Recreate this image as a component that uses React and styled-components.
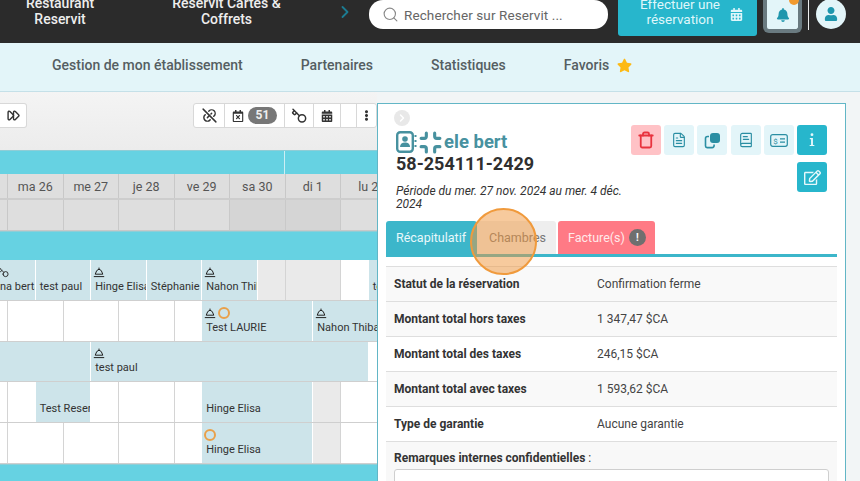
import React from 'react';
import styled, { createGlobalStyle } from 'styled-components';
import { Search, ChevronRight, FileText, BookText, FastForward, Key, Minimize, Trash } from 'lucide-react';
import { FaBell, FaUser, FaStar, FaCalendarAlt, FaRegEdit, FaEllipsisV, FaRegCalendarTimes } from 'react-icons/fa';
import { TbLinkOff } from 'react-icons/tb';

const Global = createGlobalStyle`
  html, body { margin: 0; padding: 0; width: 860px; height: 481px; overflow: hidden; background: #f2f5f6; }
  * { box-sizing: border-box; }
  body { font-family: Roboto, "Liberation Sans", sans-serif; }
`;
const Page = styled.div`width: 860px; height: 481px; overflow: hidden; position: relative; display: flex; flex-direction: column;`;
const Header = styled.header`height: 43px; flex: none; background: #2b2b2b; display: flex; align-items: flex-start; overflow: hidden;`;
const TopLink = styled.div`
  width: ${p => p.$w}px; margin-top: -5px; text-align: center; color: #eee; font-size: 14px; font-weight: 500; line-height: 16px;
`;
const Chev = styled.div`width: 24px; color: #1c7c92; display: flex; justify-content: center; padding-top: 2px;`;
const SearchBox = styled.div`
  width: 239px; height: 29px; margin-left: 12px; background: #fff; border-radius: 14px;
  display: flex; align-items: center; gap: 5px; padding: 0 14px 0 13px; color: #666; font-size: 13.5px; letter-spacing: .1px;
`;
const BookBtn = styled.div`
  width: 139px; height: 36px; margin-left: 10px; background: #27b6cc; border-radius: 0 0 3px 3px; color: #dff6fa; font-size: 13.5px; line-height: 15px;
  display: flex; align-items: center; justify-content: space-between; padding: 0 14px 0 18px; text-align: center;
`;
const BookLabel = styled.div`width: 88px; margin-top: -13px;`;
const BookIcon = styled.span`display: flex; margin-top: -8px;`;
const BellBtn = styled.div`
  width: 39px; height: 33px; margin-left: 6px; background: #e3f5f9; border: 4px solid #6a7a80; border-top: 0; border-radius: 0 0 6px 6px;
  color: #1f96ad; display: flex; align-items: center; justify-content: center; position: relative;
`;
const Dot = styled.span`position: absolute; right: -1px; top: -5px; width: 10px; height: 10px; border-radius: 50%; background: #f29a2e;`;
const Divider = styled.div`width: 1px; height: 30px; background: #eee; margin-left: 6px;`;
const Avatar = styled.div`
  width: 30px; height: 30px; border-radius: 50%; margin: -1px 0 0 7px; background: #e3f5f9; color: #1f96ad; display: flex; align-items: center; justify-content: center;
`;
const SubNav = styled.nav`
  height: 49px; flex: none; background: #e3f5f9; border-bottom: 1px solid #c5e0e8; display: flex; align-items: center; gap: 58px; padding: 0 0 4px 52px;
  color: #555e62; font-size: 14px; font-weight: 500;
`;
const NavItem = styled.div`display: flex; align-items: center; gap: 8px;`;
const Body = styled.div`flex: 1; display: flex; min-height: 0;`;
const Calendar = styled.section`width: 377px; flex: none; background: #f0f0f0; display: flex; flex-direction: column; overflow: hidden;`;
const Toolbar = styled.div`height: 58px; flex: none; padding-top: 11px; display: flex; justify-content: space-between; align-items: flex-start; background: linear-gradient(#f4f4f4, #ececec);`;
const Group = styled.div`height: 25px; display: flex; background: #fff; border: 1px solid #d8d8d8; border-radius: 3px; ${p => p.$left ? 'border-left: 0; border-radius: 0 3px 3px 0;' : ''}`;
const ToolBtn = styled.div`
  width: ${p => p.$w}px; display: flex; align-items: center; justify-content: center; gap: 4px; color: #333; border-right: 1px solid #d8d8d8;
  &:last-child { border-right: 0; }
`;
const Badge = styled.span`background: #777; color: #eee; font-size: 12px; font-weight: 700; border-radius: 9px; padding: 0 8px; height: 17px; line-height: 17px;`;
const TealBar = styled.div`
  height: ${p => p.$h}px; flex: none; background: #66d2e2; border-top: 1px solid #8fcdd6;
  display: grid; grid-template-columns: 285px 1fr;
`;
const Split = styled.div`border-right: 1px solid #cdeef4;`;
const Grid = styled.div`
  display: grid; grid-template-columns: 8px repeat(15, 27.75px); height: ${p => p.$h}px; flex: none;
  grid-template-rows: 1fr; background: ${p => p.$bg || '#fff'}; border-bottom: ${p => p.$bb || '1px solid #cfcfcf'};
`;
const Cell = styled.div`
  grid-row: 1; grid-column: ${p => p.$c}; background: ${p => p.$grey ? '#eaeaea' : 'transparent'};
  border-right: ${p => p.$line ? '1px solid #d4d4d4' : '0'};
`;
const DayLabel = styled.div`
  grid-row: 1; grid-column: span 2; display: flex; align-items: center; justify-content: center; white-space: nowrap; overflow: hidden;
  font-size: 12.5px; color: #555; border-right: 1px solid #c8c8c8;
`;
const Stub = styled.div`grid-row: 1; grid-column: 1; border-right: 1px solid #c8c8c8;`;
const HeadCell = styled.div`
  grid-row: 1; grid-column: span 2; border-right: 1px solid #c9c9c9; background: ${p => p.$dark ? '#d5d5d5' : 'transparent'};
`;
const Event = styled.div`
  grid-row: 1; grid-column: ${p => p.$c}; z-index: 1; background: #cde4ea; min-width: 0; overflow: hidden; white-space: nowrap;
  margin-right: 1px; display: flex; flex-direction: column; justify-content: flex-end; padding: 0 0 7px ${p => p.$pl ?? 4}px;
  font-size: 11px; color: #333;
`;
const Marks = styled.div`display: flex; align-items: center; gap: 2px; height: 14px; margin: 0 0 1px -2px;`;
const Ring = styled.span`width: 12px; height: 12px; border-radius: 50%; border: 2px solid #e9a04a; display: block;`;
const FlipKey = styled(Key)`transform: scaleX(-1); flex: none;`;
const Panel = styled.aside`
  width: 469px; flex: none; margin-top: 11px; background: #fff; border: 1px solid #62b6c6; border-bottom: 0; padding: 6px 8px 0 8px; position: relative; overflow: hidden;
`;
const Collapse = styled.div`
  width: 16px; height: 16px; border-radius: 50%; background: #e8e8e8; margin-left: 8px; color: #fff; display: flex; align-items: center; justify-content: center;
`;
const Top = styled.div`display: flex; justify-content: space-between; height: 84px; padding: 0 0 0 10px;`;
const Identity = styled.div`width: 232px; padding-top: 5px;`;
const Name = styled.div`display: flex; align-items: center; color: #47919f; font-size: 18.5px; font-weight: 700; height: 22px; gap: 1px;`;
const Code = styled.div`font-size: 18px; font-weight: 700; color: #2f2f2f; line-height: 22px;`;
const Period = styled.div`font-size: 12px; font-style: italic; color: #333; line-height: 13px; margin-top: 10px;`;
const Actions = styled.div`display: grid; grid-template-columns: repeat(6, 30px); column-gap: 3.2px; row-gap: 7px; margin: -1px 10px 0 0; height: 67px; justify-content: end;`;
const Act = styled.div`
  width: 30px; height: 30px; border-radius: 3px; display: flex; align-items: center; justify-content: center;
  background: ${p => p.$v === 'danger' ? '#ffc2c6' : p.$v === 'solid' ? '#27b6cc' : '#e3f5f9'};
  color: ${p => p.$v === 'danger' ? '#e8333e' : p.$v === 'solid' ? '#e6f8fb' : '#2a8ea3'};
  grid-column: ${p => p.$col || 'auto'};
`;
const Tabs = styled.div`display: flex; height: 36px; margin-top: 11px; border-bottom: 3px solid #3cb6ca;`;
const Tab = styled.div`
  height: 33px; padding: 0 0 0 ${p => p.$pl || 10}px; display: flex; align-items: center; gap: 4px; font-size: 12.5px; margin-right: ${p => p.$mr || 0}px; border-radius: 3px 3px 0 0;
  background: ${p => p.$bg}; color: ${p => p.$c}; width: ${p => p.$w}px;
`;
const TabBadge = styled.span`width: 17px; height: 17px; border-radius: 50%; background: #6f6f6f; color: #fff; font-size: 10px; font-weight: 700; display: flex; align-items: center; justify-content: center;`;
const Table = styled.div`margin-top: 9px; width: 451px; border-top: 1px solid #dedede;`;
const Row = styled.div`
  height: 35px; display: flex; align-items: center; padding-left: 8px; font-size: 12px; background: ${p => p.$alt ? '#f9f9f9' : '#fff'}; border-bottom: 1px solid #dedede; color: #444;
`;
const RowKey = styled.div`width: 203px; font-weight: 700; color: #333;`;
const Remarks = styled.div`background: #f8f8f8; padding: 9px 8px 0; height: 60px; font-size: 12px; color: #333;`;
const RemarkLabel = styled.b`font-weight: 700;`;
const TextArea = styled.div`height: 40px; margin-top: 4px; background: #fff; border: 1px solid #cfcfcf; border-radius: 3px;`;
const Spot = styled.div`
  position: absolute; left: 470px; top: 208px; width: 67px; height: 67px; border-radius: 50%;
  background: rgba(240, 150, 60, .5); border: 2.5px solid #f09a3c; z-index: 5;
`;

const Cloche = () => (
  <svg width="12" height="11" viewBox="0 0 12 11" fill="none" stroke="#222" strokeWidth="1">
    <path d="M6 .6v1.6M2.2 7.2Q3.4 2.4 6 2.2Q8.6 2.4 9.8 7.2z" /><path d="M.8 9.6h10.4" />
  </svg>
);
const Copy = () => (
  <svg width="17" height="17" viewBox="0 0 17 17">
    <rect x="6" y="1" width="10" height="10" rx="3" fill="currentColor" />
    <path d="M5 4.5H3.5A2 2 0 0 0 1.5 6.5v7.5a1.6 1.6 0 0 0 1.6 1.6h5a2 2 0 0 0 2-2v-1" fill="none" stroke="currentColor" strokeWidth="1.6" />
  </svg>
);
const Bill = () => (
  <svg width="18" height="13" viewBox="0 0 18 13" fill="none" stroke="currentColor" strokeWidth="1.2">
    <rect x=".7" y=".7" width="16.6" height="11.6" rx="2" />
    <path d="M10 4.8h5M10 8.2h5" />
    <text x="3.2" y="9.6" fontSize="8" fontFamily="Roboto" fill="currentColor" stroke="none">$</text>
  </svg>
);
const InfoGlyph = () => (
  <svg width="8" height="14" viewBox="0 0 10 18" fill="currentColor">
    <circle cx="5" cy="2.2" r="1.8" />
    <path d="M2.2 6.5h4v8.8h1.8v1.5H2v-1.5h1.8V8H2.2z" />
  </svg>
);
const ContactCard = () => (
  <svg width="21" height="22" viewBox="0 0 21 22">
    <rect x="1.2" y="1.2" width="15.6" height="19.6" rx="3" fill="none" stroke="currentColor" strokeWidth="2.4" />
    <circle cx="9" cy="8" r="2.8" fill="currentColor" />
    <path d="M4 16c0-3 2.2-4.4 5-4.4s5 1.4 5 4.4z" fill="currentColor" />
    <path d="M18.5 5h2M18.5 10h2M18.5 15h2" stroke="currentColor" strokeWidth="2" />
  </svg>
);

const days = ['ma 26', 'me 27', 'je 28', 've 29', 'sa 30', 'di 1', 'lu 2'];

function Cells({ grey = [] }) {
  const out = [<Cell key="s" $c="1" $line />];
  for (let i = 0; i < 14; i++) out.push(<Cell key={i} $c={i + 2} $grey={grey.includes(i)} $line={i % 2 === 1} />);
  return out;
}

const Ev = ({ c, mark, ring, children, pl }) => (
  <Event $c={c} $pl={pl}>
    {(mark || ring) && <Marks>{mark && <Cloche />}{ring && <Ring />}</Marks>}
    {children}
  </Event>
);

export default function App() {
  return (
    <Page>
      <Global />
      <Header>
        <TopLink $w={120}>Restaurant<br />Reservit</TopLink>
        <TopLink $w={213}>Reservit Cartes &amp;<br />Coffrets</TopLink>
        <Chev><ChevronRight size={20} strokeWidth={2.2} /></Chev>
        <SearchBox><Search size={17} color="#888" strokeWidth={1.6} />Rechercher sur Reservit ...</SearchBox>
        <BookBtn><BookLabel>Effectuer une réservation</BookLabel><BookIcon><FaCalendarAlt size={13} /></BookIcon></BookBtn>
        <BellBtn><FaBell size={14} /><Dot /></BellBtn>
        <Divider />
        <Avatar><FaUser size={14} /></Avatar>
      </Header>
      <SubNav>
        <NavItem>Gestion de mon établissement</NavItem>
        <NavItem>Partenaires</NavItem>
        <NavItem>Statistiques</NavItem>
        <NavItem>Favoris <FaStar size={15} color="#fdb913" /></NavItem>
      </SubNav>
      <Body>
        <Calendar>
          <Toolbar>
            <Group $left><ToolBtn $w={26}><FastForward size={13} strokeWidth={2.6} /></ToolBtn></Group>
            <Group>
              <ToolBtn $w={31}><TbLinkOff size={17} /></ToolBtn>
              <ToolBtn $w={60}><FaRegCalendarTimes size={12} /><Badge>51</Badge></ToolBtn>
              <ToolBtn $w={29}><FlipKey size={16} strokeWidth={2.2} /></ToolBtn>
              <ToolBtn $w={27}><FaCalendarAlt size={12} /></ToolBtn>
              <ToolBtn $w={16} />
              <ToolBtn $w={19}><FaEllipsisV size={11} /></ToolBtn>
            </Group>
          </Toolbar>
          <TealBar $h={24}><Split /><div /></TealBar>
          <Grid $h={26} $bg="#dedede" $bb="2px solid #cdcdcd">
            <Stub />
            {days.map(d => <DayLabel key={d}>{d}</DayLabel>)}
          </Grid>
          <Grid $h={31} $bg="#dedede" $bb="1px solid #c8c8c8">
            <Stub />
            {days.map((d, i) => <HeadCell key={d} $dark={i === 4 || i === 5} />)}
          </Grid>
          <TealBar $h={29} />
          <Grid $h={41}>
            <Cells grey={[9, 10, 11]} />
            <Event $c="1 / span 2" $pl={0}><Marks><FlipKey size={11} strokeWidth={2} color="#222" /></Marks>na berta</Event>
            <Ev c="3 / span 2">test paul</Ev>
            <Ev c="5 / span 2" mark>Hinge Elisa</Ev>
            <Ev c="7 / span 2">Stéphanie</Ev>
            <Ev c="9 / span 2" mark>Nahon Thibault</Ev>
            <Ev c="15 / span 2">test</Ev>
          </Grid>
          <Grid $h={41}>
            <Cells />
            <Ev c="9 / span 4" mark ring>Test LAURIE</Ev>
            <Ev c="13 / span 4" mark>Nahon Thibault</Ev>
          </Grid>
          <Grid $h={40}>
            <Cells />
            <Ev c="1 / span 4"></Ev>
            <Ev c="5 / span 10" mark>test paul</Ev>
          </Grid>
          <Grid $h={41}>
            <Cells grey={[11]} />
            <Ev c="3 / span 2">Test Reservit</Ev>
            <Ev c="9 / span 4">Hinge Elisa</Ev>
          </Grid>
          <Grid $h={41}>
            <Cells grey={[11]} />
            <Ev c="9 / span 4" ring>Hinge Elisa</Ev>
          </Grid>
          <TealBar $h={20} />
        </Calendar>
        <Panel>
          <Collapse><ChevronRight size={12} strokeWidth={3} /></Collapse>
          <Top>
            <Identity>
              <Name>
                <ContactCard />
                <Minimize size={25} strokeWidth={3} />
                ele bert
              </Name>
              <Code>58-254111-2429</Code>
              <Period>Période du mer. 27 nov. 2024 au mer. 4 déc. 2024</Period>
            </Identity>
            <Actions>
              <Act $v="danger"><Trash size={18} strokeWidth={2.4} /></Act>
              <Act><FileText size={16} strokeWidth={1.7} /></Act>
              <Act><Copy /></Act>
              <Act><BookText size={16} strokeWidth={1.7} /></Act>
              <Act><Bill /></Act>
              <Act $v="solid"><InfoGlyph /></Act>
              <Act $v="solid" $col="6"><FaRegEdit size={17} /></Act>
            </Actions>
          </Top>
          <Tabs>
            <Tab $w={91} $bg="#3cb6ca" $c="#e8f8fb">Récapitulatif</Tab>
            <Tab $w={79} $pl={12} $mr={2} $bg="#eeeeee" $c="#777">Chambres</Tab>
            <Tab $w={97} $bg="#ff7a85" $c="#ffe9ea">Facture(s) <TabBadge>!</TabBadge></Tab>
          </Tabs>
          <Table>
            <Row $alt><RowKey>Statut de la réservation</RowKey>Confirmation ferme</Row>
            <Row $alt><RowKey>Montant total hors taxes</RowKey>1 347,47 $CA</Row>
            <Row><RowKey>Montant total des taxes</RowKey>246,15 $CA</Row>
            <Row $alt><RowKey>Montant total avec taxes</RowKey>1 593,62 $CA</Row>
            <Row><RowKey>Type de garantie</RowKey>Aucune garantie</Row>
            <Remarks><RemarkLabel>Remarques internes confidentielles</RemarkLabel> :<TextArea /></Remarks>
          </Table>
        </Panel>
      </Body>
      <Spot />
    </Page>
  );
}
